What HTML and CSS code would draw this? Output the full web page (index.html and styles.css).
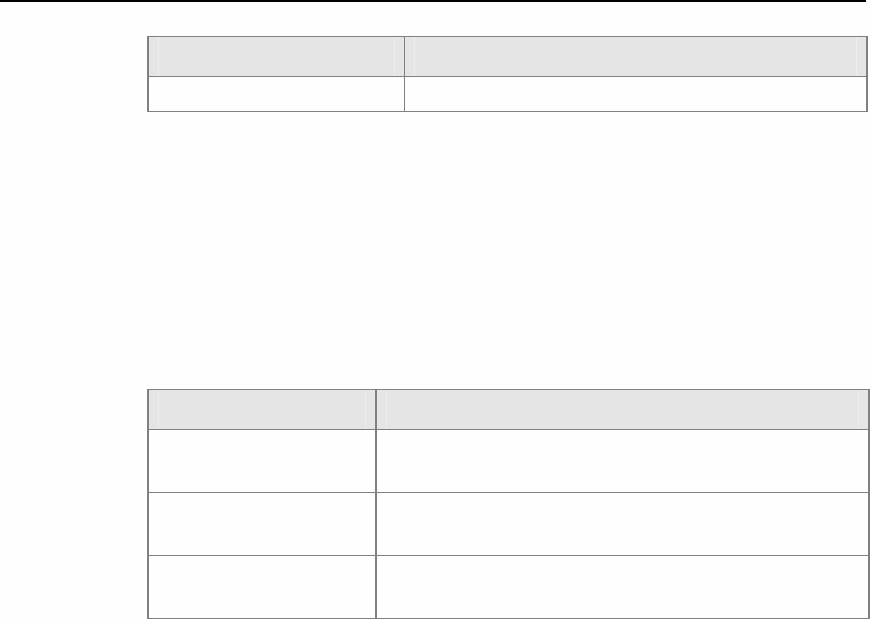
FILE: index.html
```html
<!DOCTYPE html>
<html lang="en">
<head>
<meta charset="utf-8">
<title>Document page</title>
<link rel="stylesheet" href="styles.css">
</head>
<body>
<div class="page">
  <div class="rule"></div>

  <div class="table t1">
    <div class="cell head c1"><div class="pad"></div></div>
    <div class="cell head c2"><div class="pad"></div></div>
    <div class="cell body c1 last"></div>
    <div class="cell body c2 last"></div>
  </div>

  <div class="table t2">
    <div class="cell head c1"><div class="pad"></div></div>
    <div class="cell head c2"><div class="pad"></div></div>
    <div class="cell body c1"></div>
    <div class="cell body c2"></div>
    <div class="cell body c1"></div>
    <div class="cell body c2"></div>
    <div class="cell body c1 last"></div>
    <div class="cell body c2 last"></div>
  </div>
</div>
</body>
</html>
```

FILE: styles.css
```css
html, body {
  margin: 0;
  padding: 0;
  background: #fefefe;
  font-family: "Liberation Sans", Arial, sans-serif;
}

.page {
  width: 871px;
  height: 619px;
  overflow: hidden;
}

.rule {
  width: 866px;
  height: 2px;
  background: #000;
}

.table {
  box-sizing: border-box;
  display: grid;
  margin-left: 147px;
  border-top: 1px solid #808080;
  border-bottom: 1px solid #808080;
  border-left: 2px solid #808080;
  border-right: 2px solid #808080;
}

.t1 {
  margin-top: 34px;
  width: 721px;
  grid-template-columns: 256px 1fr;
  grid-template-rows: 40px 34px;
}

.t2 {
  margin-top: 277px;
  width: 723px;
  grid-template-columns: 228px 1fr;
  grid-template-rows: 40px 63px 63px 62px;
}

.cell {
  box-sizing: border-box;
  border-bottom: 1px solid #808080;
}

.cell.last {
  border-bottom: none;
}

.head {
  background: #e5e5e5;
  display: flex;
}

.t1 .c1 {
  border-right: 1px solid #808080;
}

.t2 .c1 {
  border-right: 2px solid #808080;
}

.pad {
  flex: 1;
  margin: 0 9px;
  border-left: 1px solid #ededed;
  border-right: 1px solid #ededed;
}
```
